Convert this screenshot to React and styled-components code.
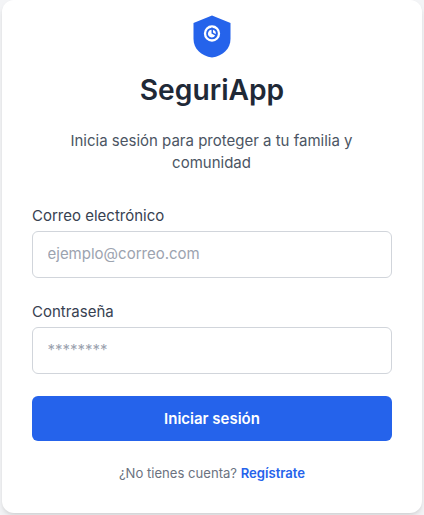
import React from 'react';
import styled, { createGlobalStyle } from 'styled-components';

const GlobalStyle = createGlobalStyle`
  * { box-sizing: border-box; }
  body { margin: 0; background: #f3f4f6; font-family: Inter, "Liberation Sans", sans-serif; overflow: hidden; }
`;
const Page = styled.main`
  height: 515px;
  padding: 0 2px 2px;
`;
const Card = styled.section`
  height: 513px;
  padding: 14px 30px 0;
  background: #fff;
  border-radius: 12px;
  box-shadow: 0 4px 6px -1px rgba(0, 0, 0, 0.1), 0 2px 4px -2px rgba(0, 0, 0, 0.1);
  display: flex;
  flex-direction: column;
`;
const Header = styled.header`
  display: flex;
  flex-direction: column;
  align-items: center;
  text-align: center;
`;
const Logo = styled.svg`
  width: 38px;
  height: 45px;
`;
const Title = styled.h1`
  margin: 13px 0 0;
  font-size: 28.2px;
  line-height: 36px;
  font-weight: 600;
  color: #1f2937;
`;
const Subtitle = styled.p`
  margin: 22px 0 0;
  width: 300px;
  padding-right: 1px;
  font-size: 15px;
  line-height: 22px;
  color: #4b5563;
`;
const Form = styled.form`
  display: flex;
  flex-direction: column;
  margin-top: 31px;
`;
const Field = styled.div`
  display: flex;
  flex-direction: column;
  margin-bottom: ${({ $gap }) => $gap}px;
`;
const Label = styled.label`
  font-size: 15px;
  line-height: 22px;
  margin-bottom: 4px;
  color: #374151;
`;
const Input = styled.input`
  height: 47px;
  padding: 0 14.5px ${({ $lift }) => $lift}px;
  border: 1px solid #d1d5db;
  border-radius: 6px;
  font: 15px Inter, sans-serif;
  &::placeholder { color: #9ca3af; opacity: 1; }
`;
const Button = styled.button`
  height: 45px;
  border: 0;
  border-radius: 6px;
  background: #2563eb;
  color: #fff;
  font: 600 15px Inter, sans-serif;
`;
const Footer = styled.p`
  margin: 22px 0 0;
  text-align: center;
  font-size: 13.1px;
  line-height: 20px;
  color: #6b7280;
`;
const Link = styled.a`
  font-weight: 600;
  color: #2563eb;
`;

export default function App() {
  return (
    <Page>
      <GlobalStyle />
      <Card>
        <Header>
          <Logo viewBox="0 0 38 45" aria-hidden="true">
            <path d="M19 1.500 37.500 9V25C37.500 34.500 30 42 19 43.500 8 42 .5 34.500 .5 25V9Z" fill="#2563eb" />
            <circle cx="19" cy="19.500" r="7" fill="none" stroke="#fff" strokeWidth="2.300" />
            <path d="M19 13.500V15.500" stroke="#2563eb" strokeWidth="1.200" />
            <path d="M18.500 15.800A3.900 3.900 0 1 0 22.200 21.600L18.500 19.500ZM20 15.800V18.600L22.700 20.200A3.900 3.900 0 0 0 20 15.800Z" fill="#fff" />
          </Logo>
          <Title>SeguriApp</Title>
          <Subtitle>Inicia sesión para proteger a tu familia y comunidad</Subtitle>
        </Header>
        <Form>
          <Field $gap={23}>
            <Label htmlFor="email">Correo electrónico</Label>
            <Input id="email" type="email" placeholder="ejemplo@correo.com" $lift={2} />
          </Field>
          <Field $gap={22}>
            <Label htmlFor="password">Contraseña</Label>
            <Input id="password" type="password" placeholder="********" $lift={3} />
          </Field>
          <Button type="button">Iniciar sesión</Button>
        </Form>
        <Footer>¿No tienes cuenta? <Link>Regístrate</Link></Footer>
      </Card>
    </Page>
  );
}
